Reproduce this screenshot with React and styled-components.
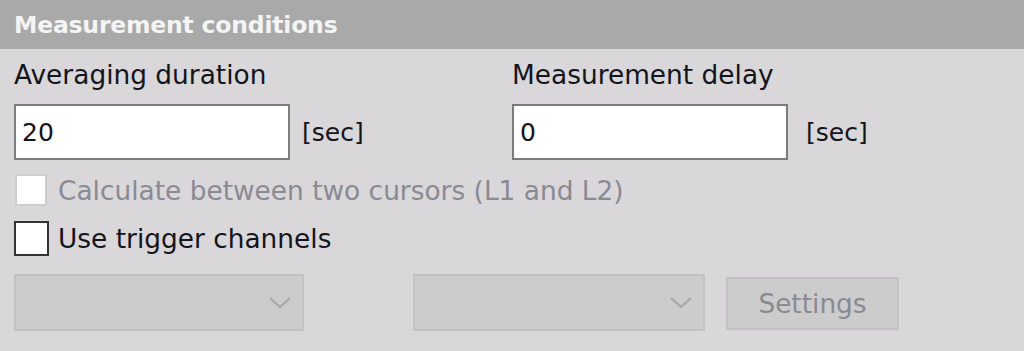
import React from 'react';
import styled, { createGlobalStyle } from 'styled-components';

const GlobalStyle = createGlobalStyle`
  html, body {
    margin: 0;
    padding: 0;
    background: #d9d7d9;
  }
  body {
    font-family: "DejaVu Sans", Tahoma, sans-serif;
  }
`;

const Panel = styled.div`
  width: 1024px;
  height: 351px;
  background: #d9d7d9;
  overflow: hidden;
`;

const Header = styled.div`
  height: 49px;
  background: #a9a9a9;
  display: flex;
  align-items: center;
  padding-left: 14px;
  color: #f4f4f4;
  font-weight: bold;
  font-size: 23.5px;
  letter-spacing: -0.2px;
`;

const Body = styled.div`
  padding: 9px 0 0 14px;
`;

const Fields = styled.div`
  display: grid;
  grid-template-columns: 498px 400px;
`;

const Field = styled.div`
  display: flex;
  flex-direction: column;
`;

const Label = styled.div`
  font-size: 26.4px;
  color: #14141c;
  height: 34px;
  line-height: 34px;
  margin-bottom: 12px;
`;

const InputRow = styled.div`
  display: flex;
  align-items: center;
  gap: 12px;
`;

const TextBox = styled.div`
  width: 276px;
  height: 56px;
  box-sizing: border-box;
  border: 2px solid #7c7c7c;
  background: #fff;
  display: flex;
  align-items: center;
  padding-left: 6px;
  font-size: 25px;
  color: #14141c;
`;

const Unit = styled.span`
  font-size: 25px;
  color: #14141c;
  margin-left: ${(p) => p.$offset || 0}px;
`;

const CheckRow = styled.div`
  display: flex;
  align-items: center;
  height: ${(p) => p.$h}px;
  margin-top: ${(p) => p.$mt}px;
`;

const Box = styled.div`
  width: ${(p) => (p.$disabled ? 32 : 35)}px;
  height: ${(p) => (p.$disabled ? 32 : 35)}px;
  box-sizing: border-box;
  background: #fff;
  border: 2px solid ${(p) => (p.$disabled ? '#cdcdcd' : '#333333')};
  margin-left: ${(p) => (p.$disabled ? 1 : 0)}px;
  margin-right: ${(p) => (p.$disabled ? 11 : 9)}px;
`;

const CheckText = styled.span`
  font-size: 26.4px;
  color: ${(p) => (p.$disabled ? '#8a8a94' : '#14141c')};
`;

const ControlRow = styled.div`
  display: flex;
  align-items: center;
  margin-top: 17px;
`;

const Combo = styled.div`
  width: ${(p) => p.$w}px;
  height: 57px;
  box-sizing: border-box;
  background: #cccccc;
  border: 2px solid #c2c2c2;
  display: flex;
  align-items: center;
  justify-content: flex-end;
  padding-right: 10px;
  margin-right: ${(p) => p.$mr}px;
`;

const Button = styled.div`
  width: 173px;
  height: 53px;
  margin-top: 2px;
  box-sizing: border-box;
  background: #cccccc;
  border: 2px solid #c2c2c2;
  display: flex;
  align-items: center;
  justify-content: center;
  font-size: 26.4px;
  color: #8a8a94;
`;

const Chevron = () => (
  <svg width="24" height="14" viewBox="0 0 24 14">
    <path d="M2 2 L12 11 L22 2" fill="none" stroke="#a8a8a8" strokeWidth="2.2" />
  </svg>
);

export default function App() {
  return (
    <Panel>
      <GlobalStyle />
      <Header>Measurement conditions</Header>
      <Body>
        <Fields>
          <Field>
            <Label>Averaging duration</Label>
            <InputRow>
              <TextBox>20</TextBox>
              <Unit>[sec]</Unit>
            </InputRow>
          </Field>
          <Field>
            <Label>Measurement delay</Label>
            <InputRow>
              <TextBox>0</TextBox>
              <Unit $offset={6}>[sec]</Unit>
            </InputRow>
          </Field>
        </Fields>
        <CheckRow $h={34} $mt={13}>
          <Box $disabled />
          <CheckText $disabled>Calculate between two cursors (L1 and L2)</CheckText>
        </CheckRow>
        <CheckRow $h={37} $mt={13}>
          <Box />
          <CheckText>Use trigger channels</CheckText>
        </CheckRow>
        <ControlRow>
          <Combo $w={290} $mr={109}>
            <Chevron />
          </Combo>
          <Combo $w={292} $mr={21}>
            <Chevron />
          </Combo>
          <Button>Settings</Button>
        </ControlRow>
      </Body>
    </Panel>
  );
}
